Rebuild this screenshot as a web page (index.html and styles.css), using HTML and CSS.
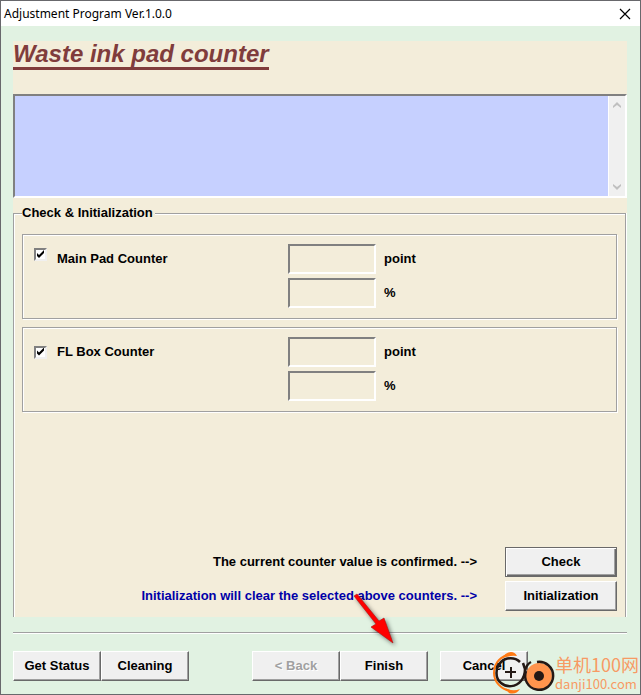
FILE: index.html
```
<!DOCTYPE html>
<html lang="en">
<head>
  <meta charset="UTF-8">
  <meta name="viewport" content="width=device-width, initial-scale=1.0">
  <title>Adjustment Program Ver.1.0.0</title>
  <link rel="stylesheet" href="styles.css">
</head>
<body>
  <div class="window">
    <header class="titlebar">
      <span class="titlebar__text">Adjustment Program Ver.1.0.0</span>
      <button class="titlebar__close" type="button" aria-label="Close">
        <svg width="12" height="12" viewBox="0 0 12 12"><path d="M1 1L11 11M11 1L1 11" stroke="#000" stroke-width="1.2" fill="none"/></svg>
      </button>
    </header>

    <main class="content">
      <div class="panel">
        <h1 class="heading"><span class="heading__text">Waste ink pad counter</span></h1>

        <div class="log">
          <textarea class="log__text" aria-label="Messages" readonly></textarea>
          <div class="log__scroll">
            <svg width="8" height="6" viewBox="0 0 8 6"><path d="M0 6V4L4 0L8 4V6L4 3Z" fill="#bfbfbf"/></svg>
            <svg width="8" height="6" viewBox="0 0 8 6"><path d="M0 0V2L4 6L8 2V0L4 3Z" fill="#bfbfbf"/></svg>
          </div>
        </div>

        <fieldset class="check">
          <legend class="check__legend">Check &amp; Initialization</legend>

          <div class="counter">
            <input class="tick tick--top" type="checkbox" id="main-pad" checked>
            <label for="main-pad">Main Pad Counter</label>
            <input class="field" type="text" id="main-point" aria-label="Main pad points" readonly>
            <label for="main-point">point</label>
            <input class="field field--second" type="text" id="main-percent" aria-label="Main pad percent" readonly>
            <label for="main-percent">%</label>
          </div>

          <div class="counter">
            <input class="tick" type="checkbox" id="fl-box" checked>
            <label for="fl-box">FL Box Counter</label>
            <input class="field" type="text" id="fl-point" aria-label="FL box points" readonly>
            <label for="fl-point">point</label>
            <input class="field field--second" type="text" id="fl-percent" aria-label="FL box percent" readonly>
            <label for="fl-percent">%</label>
          </div>

          <div class="actions">
            <div class="actions__row">
              <span>The current counter value is confirmed. --&gt;</span>
              <button class="btn btn--wide btn--default" type="button">Check</button>
            </div>
            <div class="actions__row">
              <span class="actions__warn">Initialization will clear the selected above counters. --&gt;</span>
              <button class="btn btn--wide" type="button">Initialization</button>
            </div>
          </div>
        </fieldset>
      </div>

      <hr class="line">

      <footer class="footer">
        <div class="footer__group">
          <button class="btn" type="button">Get Status</button>
          <button class="btn" type="button">Cleaning</button>
        </div>
        <div class="footer__group footer__nav">
          <button class="btn" type="button" disabled>&lt; Back</button>
          <div class="finish">
            <button class="btn" type="button">Finish</button>
            <svg class="arrow" width="60" height="64" viewBox="0 0 60 64">
              <path d="M3 6L6 4L28 31L33 28L42 53L20 37L25 34Z" fill="#f00" stroke="#b01010" stroke-width="0.6"/>
            </svg>
          </div>
        </div>
        <button class="btn" type="button">Cancel</button>
      </footer>
    </main>

    <div class="mark">
      <svg class="mark__logo" width="64" height="42" viewBox="0 0 64 42">
        <path d="M20 3C10 3 3 11 3 21C3 30 10 37 19 39" fill="none" stroke="#ff7a14" stroke-width="2"/>
        <path d="M10 7Q15 0 20 0Q24 0 26 4Q17 3 10 7ZM14 36Q22 40 29 37Q25 43 18 41Z" fill="#ff7a14"/>
        <path d="M29 10C24 5 15 5 10 10C4 16 4 26 10 31C16 36 25 35 30 29Q34 24 34 17L32 11" fill="none" stroke="#231815" stroke-width="2.5"/>
        <path d="M14 20H25M20 15V26" stroke="#231815" stroke-width="2"/>
        <circle cx="48" cy="24" r="13" fill="#ff944d"/>
        <path d="M34 18Q36 12 40 10M46 10A14 14 0 1 1 35 19" fill="none" stroke="#231815" stroke-width="2.5"/>
        <circle cx="48" cy="24" r="5" fill="#231815"/>
      </svg>
      <div class="mark__text">
        <span class="mark__name" lang="zh">单机100网</span>
        <span class="mark__site">danji100.com</span>
      </div>
    </div>
  </div>
</body>
</html>
```
FILE: styles.css
```
* {
  margin: 0;
  padding: 0;
  box-sizing: border-box;
}

body {
  background: #68686c;
  color: #000;
  font: bold 13px/16px "Liberation Sans", Arial, sans-serif;
}

.window {
  position: relative;
  display: flex;
  flex-direction: column;
  min-height: 100vh;
  border: 1px solid #68686c;
  background: #e1f2e2;
}

/* Title bar */

.titlebar {
  display: flex;
  align-items: center;
  justify-content: space-between;
  height: 25px;
  padding: 0 9px 0 3px;
  background: #fff;
}

.titlebar__text {
  font: 12px/16px "Noto Sans", sans-serif;
}

.titlebar__close {
  display: flex;
  border: 0;
  background: none;
}

.content {
  flex: 1;
  display: flex;
  flex-direction: column;
  padding: 15px 13px 13px 12px;
}

.panel {
  flex: 1;
  display: flex;
  flex-direction: column;
  background: #f3edda;
}

.heading {
  height: 53px;
  font-size: 24px;
  line-height: 26px;
  font-style: italic;
  color: #803c3c;
}

.heading__text {
  display: inline-block;
  border-bottom: 3px solid #803c3c;
}

/* Message box */

.log {
  display: flex;
  height: 104px;
  border: 2px solid;
  border-color: #808080 #fff #fff #808080;
  background: #c6d0ff;
}

.log__text {
  flex: 1;
  border: 0;
  resize: none;
  background: #c6d0ff;
  font: inherit;
}

.log__scroll {
  display: flex;
  flex-direction: column;
  align-items: center;
  justify-content: space-between;
  width: 17px;
  padding: 6px 0;
  border-left: 1px solid #fff;
  background: #f0f0f0;
}

/* Group box, open at the bottom */

.check {
  flex: 1;
  min-width: 0;
  margin: 7px 1px 0 0;
  padding: 13px 8px 6px;
  border: 1px solid #a0a0a0;
  border-bottom: 0;
  box-shadow: inset 1px 1px #fff, 1px 0 #fff;
}

.check__legend {
  padding: 0 2px 0 0;
  background: #f3edda;
}

.counter {
  display: grid;
  grid-template-columns: 23px 231px 88px 1fr;
  row-gap: 4px;
  align-items: center;
  margin-bottom: 8px;
  padding: 9px 11px 10px;
  border: 1px solid #a0a0a0;
  box-shadow: inset 1px 1px #fff, 1px 1px #fff;
}

.field {
  width: 88px;
  height: 30px;
  padding: 0 4px;
  border: 2px solid;
  border-color: #808080 #fff #fff #808080;
  background: #f3edda;
  font: inherit;
}

.field--second {
  grid-column: 3;
}

.field + label {
  padding-left: 8px;
}

.tick {
  appearance: none;
  width: 13px;
  height: 13px;
  border: 2px solid;
  border-color: #808080 #f0f0f0 #f0f0f0 #808080;
  background: #fff;
}

.tick--top {
  align-self: start;
  margin-top: 4px;
}

.tick:checked::before {
  content: "";
  display: block;
  width: 9px;
  height: 9px;
  background: #000;
  clip-path: polygon(1px 3px, 3px 5px, 8px 0, 8px 3px, 3px 8px, 1px 6px);
}

.actions {
  display: grid;
  gap: 4px;
  margin-top: 135px;
}

.actions__row {
  display: flex;
  align-items: center;
  justify-content: flex-end;
  gap: 28px;
}

.actions__warn {
  color: #0000a8;
}

.btn {
  width: 88px;
  height: 30px;
  border: 1px solid;
  border-color: #fff #696969 #696969 #fff;
  background: #f0f0f0;
  box-shadow: inset -1px -1px #a0a0a0;
  color: #000;
  font: inherit;
}

.btn--wide {
  width: 112px;
}

.btn--default {
  border-color: #696969;
  box-shadow: inset 1px 1px #fff, inset -1px -1px #696969, inset -2px -2px #a0a0a0;
}

.btn:disabled {
  color: #a0a0a0;
  text-shadow: 1px 1px #fff;
}

.line {
  margin: 15px 0 17px;
  border: 0;
  border-top: 1px solid #a0a0a0;
  border-bottom: 1px solid #fff;
}

.footer {
  display: flex;
}

.footer__group {
  display: flex;
}

.footer__nav {
  margin: 0 12px 0 63px;
}

.finish {
  position: relative;
}

.arrow {
  position: absolute;
  left: 11px;
  bottom: 27px;
  filter: drop-shadow(2px 2px 2px rgba(0, 0, 0, 0.5));
}

/* Site mark over the lower right corner */

.mark {
  position: absolute;
  right: 1px;
  bottom: 0;
  display: flex;
  align-items: center;
  color: #f79a64;
}

.mark__text {
  display: flex;
  flex-direction: column;
  font-family: "Noto Sans CJK SC", sans-serif;
  font-weight: normal;
}

.mark__name {
  font-size: 18px;
  line-height: 22px;
}

.mark__site {
  font-size: 13px;
  line-height: 18px;
}
```
